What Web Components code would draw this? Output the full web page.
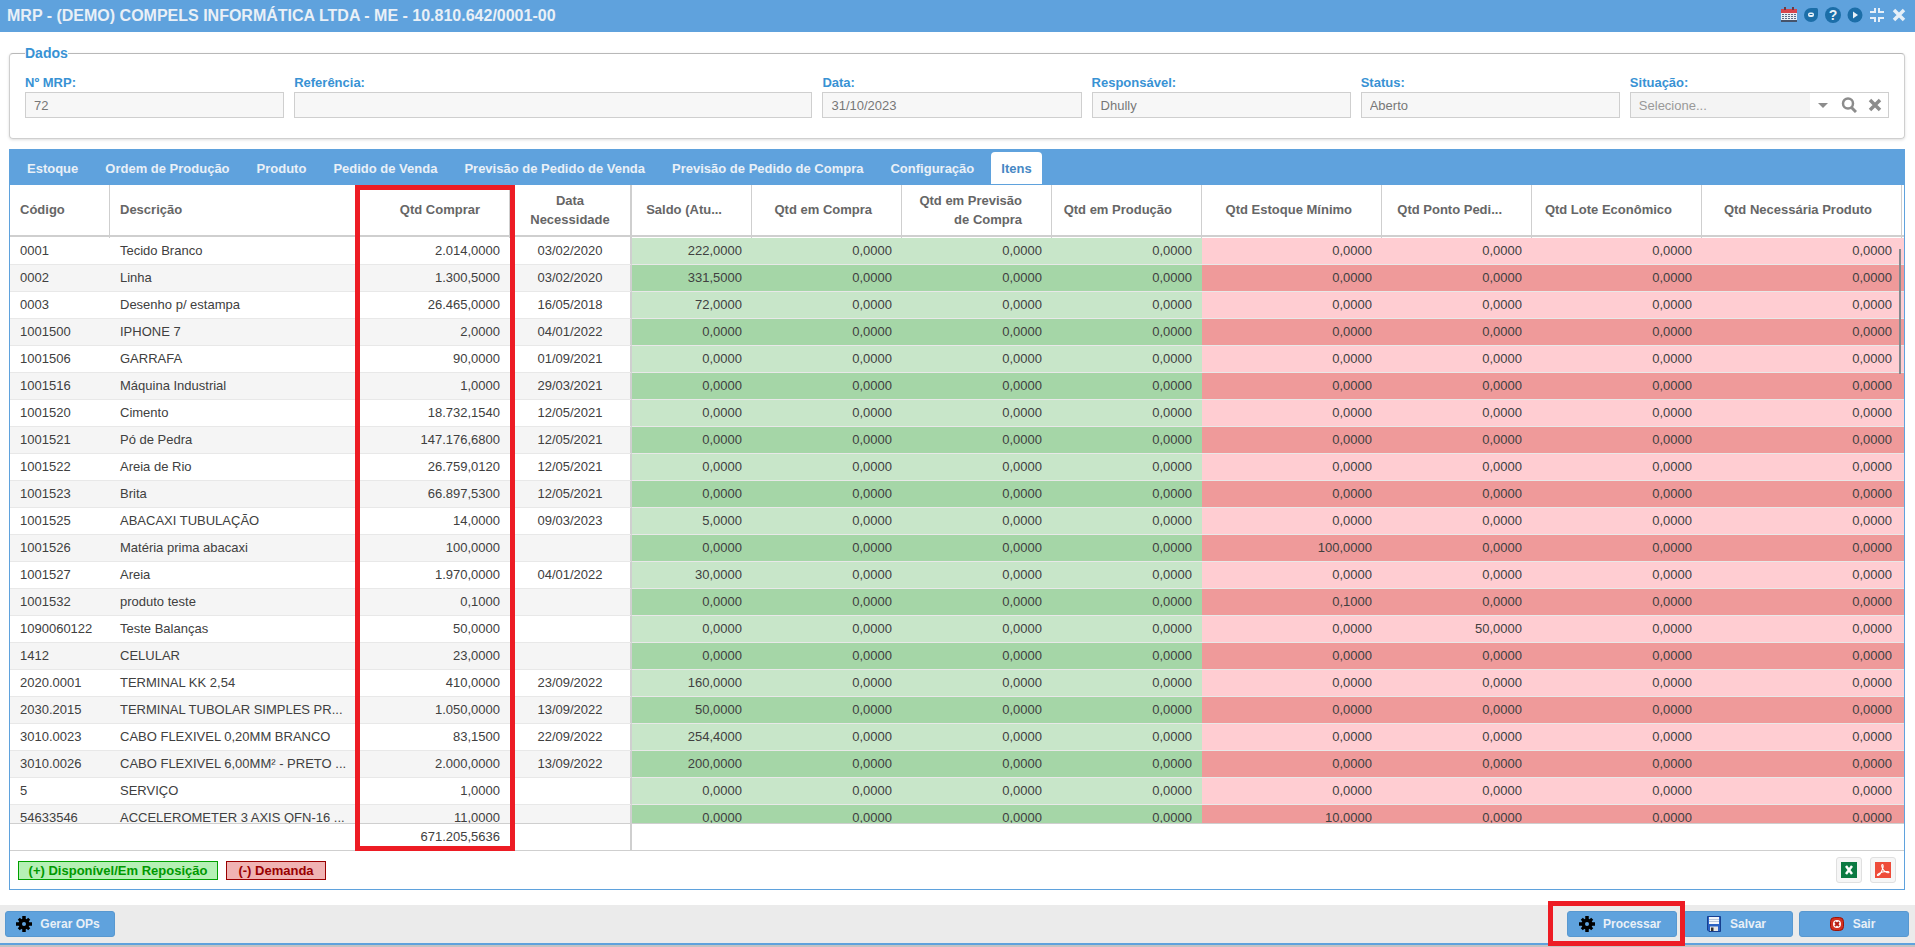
<!DOCTYPE html>
<html lang="pt-BR">
<head>
<meta charset="utf-8">
<title>MRP</title>
<style>
html, body {
  height: 100%;
  margin: 0;
}
body {
  font-family: "Liberation Sans", Arial, sans-serif;
  font-size: 13px;
  color: #404040;
  background: #fff;
  overflow: hidden;
  --blue: #5fa2dd;
  --line: #cfcfcf;
}
</style>
</head>
<body>
<mrp-window heading="MRP - (DEMO) COMPELS INFORMÁTICA LTDA - ME - 10.810.642/0001-00">
  <mrp-fieldset legend="Dados">
    <mrp-field label="Nº MRP:" value="72"></mrp-field>
    <mrp-field label="Referência:" value=""></mrp-field>
    <mrp-field label="Data:" value="31/10/2023"></mrp-field>
    <mrp-field label="Responsável:" value="Dhully"></mrp-field>
    <mrp-field label="Status:" value="Aberto"></mrp-field>
    <mrp-lookup label="Situação:" placeholder="Selecione..."></mrp-lookup>
  </mrp-fieldset>
  <mrp-tabs tabs="Estoque|Ordem de Produção|Produto|Pedido de Venda|Previsão de Pedido de Venda|Previsão de Pedido de Compra|Configuração|Itens" active="Itens">
    <mrp-grid></mrp-grid>
    <mrp-legend></mrp-legend>
  </mrp-tabs>
  <mrp-button slot="left" icon="gear">Gerar OPs</mrp-button>
  <mrp-button slot="right" icon="gear" marked>Processar</mrp-button>
  <mrp-button slot="right" icon="disk">Salvar</mrp-button>
  <mrp-button slot="right" icon="exit">Sair</mrp-button>
</mrp-window>

<script>
// Icons, all drawn on a 16x16 box
const icons = {
  calendar: `<path fill="#e9edf3" d="M0 4h16v11H0z"/><path fill="#d8434b" d="M0 2h16v4H0z"/><path fill="#6d3a44" d="M3 0h2v3H3zM11 0h2v3h-2z"/><path stroke="#5b6b86" stroke-dasharray="2 1" fill="none" d="M1 7.500h14M1 9.500h14M1 11.500h14"/><path fill="#46536a" d="M0 13h16v2H0z"/>`,
  chat: `<path fill="#1c6ea8" d="M8 1h5.500q1.500 0 1.500 1.500V8a7 7 0 1 1-7-7z"/><rect x="5" y="5.500" width="6" height="4.500" rx="2" fill="#e8f1f8"/><path stroke="#1c6ea8" d="M6.500 7.500h3"/>`,
  help: `<circle cx="8" cy="8" r="8" fill="#1c6ea8"/><text x="8" y="13" text-anchor="middle" font-size="14" font-weight="bold" fill="#e8f1f8">?</text>`,
  play: `<circle cx="8" cy="8" r="7.500" fill="#1c6ea8"/><path fill="#e8f1f8" d="M6 4.500l5 3.500-5 3.500z"/>`,
  compress: `<path fill="none" stroke="#e6eff8" stroke-width="2" d="M6 1v4H1M10 1v4h5M6 15v-4H1M10 15v-4h5"/>`,
  close: `<path fill="none" stroke="currentColor" stroke-width="3.500" d="M3 3l10 10M13 3L3 13"/>`,
  arrow: `<path fill="#8c8c8c" d="M3 6h10l-5 5z"/>`,
  search: `<circle cx="7" cy="6.500" r="5" fill="none" stroke="#8c8c8c" stroke-width="2.500"/><path stroke="#8c8c8c" stroke-width="3" d="M10.500 10.500l4.500 4.500"/>`,
  gear: `<path stroke="#000" stroke-width="3.500" d="M8 0v16M0 8h16"/><path stroke="#000" stroke-width="3" d="M2.800 2.800l10.400 10.400M13.200 2.800L2.800 13.200"/><circle cx="8" cy="8" r="5.500"/><circle cx="8" cy="8" r="2" fill="#5fa2dd"/>`,
  disk: `<path fill="#2a62c4" stroke="#173f8f" d="M1.500.5h13v15H3l-1.500-1.500z"/><path fill="#f4f7fb" d="M3 1h10v7H3z"/><path stroke="#b9c6da" d="M3 3.500h10M3 5.500h10"/><path fill="#e6e6e6" d="M4 10.500h8V15H4z"/><path fill="#333" d="M5 11.500h2.500V15H5z"/>`,
  exit: `<rect x="1.500" y="1.500" width="13" height="13" rx="4" fill="#d3311f" stroke="#9c1408"/><circle cx="8" cy="8" r="4" fill="#fff"/><path stroke="#b51c10" stroke-width="2" d="M6 6l4 4M10 6l-4 4"/>`,
  excel: `<path fill="#0b7a42" d="M0 0h16v16H0z"/><path stroke="#fff" stroke-width="2.500" d="M5 4l6 8M11 4l-6 8"/>`,
  pdf: `<path fill="#ee4c3a" d="M0 0h16v16H0z"/><path fill="none" stroke="#fff" stroke-width="1.100" d="M7.500 2.500c-1.500 0-.5 4 1 5.500 2 2.500 5.500 3.500 5.500 2.200s-6-.7-9 .8-3 2.500-2 2.500c2 0 5.500-7.500 5.200-9.500-.1-1-.3-1.500-.7-1.500z"/>`
};

function icon(name) {
  return `<svg width="16" height="16" viewBox="0 0 16 16" aria-hidden="true">${icons[name]}</svg>`;
}

// Base class - opens the shadow root and fills it with what render() returns
class MrpElement extends HTMLElement {
  constructor() {
    super();
    this.attachShadow({mode: "open"});
  }
  connectedCallback() {
    const template = document.createElement("template");
    template.innerHTML = this.render();
    this.shadowRoot.replaceChildren(template.content.cloneNode(true));
  }
}

// Whole screen: title bar, content, bar with the actions
class MrpWindow extends MrpElement {
  render() {
    return `
<style>
:host {
  display: flex;
  flex-direction: column;
  height: 100vh;
}
header {
  display: flex;
  align-items: center;
  justify-content: space-between;
  flex: none;
  height: 32px;
  padding: 0 8px 0 7px;
  box-sizing: border-box;
  background: var(--blue);
  color: #e9f0f7;
}
h1 {
  margin: 0;
  font-size: 16px;
}
nav {
  display: flex;
  gap: 6px;
  padding-bottom: 2px;
}
nav button {
  display: flex;
  padding: 0;
  border: 0;
  background: none;
  color: #e6eff8;
}
main {
  display: flex;
  flex-direction: column;
  flex: 1;
  min-height: 0;
  padding: 13px 10px 15px 9px;
  gap: 10px;
}
footer {
  display: flex;
  justify-content: space-between;
  flex: none;
  padding: 6px 6px 6px 5px;
  background: #ebebeb;
  border-bottom: 2px solid var(--blue);
  box-shadow: 0 2px #c4c4c4;
  margin-bottom: 2px;
}
footer div {
  display: flex;
  gap: 6px;
}
</style>
<header>
  <h1>${this.getAttribute("heading")}</h1>
  <nav>
    <button type="button" aria-label="Agenda">${icon("calendar")}</button>
    <button type="button" aria-label="Chat">${icon("chat")}</button>
    <button type="button" aria-label="Ajuda">${icon("help")}</button>
    <button type="button" aria-label="Vídeo">${icon("play")}</button>
    <button type="button" aria-label="Restaurar">${icon("compress")}</button>
    <button type="button" aria-label="Fechar">${icon("close")}</button>
  </nav>
</header>
<main><slot></slot></main>
<footer>
  <div><slot name="left"></slot></div>
  <div><slot name="right"></slot></div>
</footer>`;
  }
}

class MrpFieldset extends MrpElement {
  render() {
    return `
<style>
:host {
  display: block;
}
fieldset {
  margin: 0;
  padding: 13px 15px 20px;
  border: 1px solid var(--line);
  border-top-color: #b8b8b8;
  border-radius: 4px;
  box-shadow: 0 1px 3px #ddd;
}
legend {
  padding: 0;
  font-size: 14px;
  line-height: 16px;
  font-weight: bold;
  color: #3892d4;
}
div {
  display: grid;
  grid-template-columns: 1fr 2fr 1fr 1fr 1fr 1fr;
  gap: 10px;
}
</style>
<fieldset>
  <legend>${this.getAttribute("legend")}</legend>
  <div><slot></slot></div>
</fieldset>`;
  }
}

const field_style = `
:host {
  display: block;
  min-width: 0;
}
label {
  display: block;
  line-height: 18px;
  font-weight: bold;
  color: #3892d4;
}
input, select {
  display: block;
  box-sizing: border-box;
  width: 100%;
  height: 26px;
  margin: 0;
  padding: 0 8px;
  border: 1px solid var(--line);
  border-radius: 0;
  background: #f7f7f7;
  font: inherit;
  color: #777;
}`;

class MrpField extends MrpElement {
  render() {
    return `
<style>${field_style}</style>
<label for="box">${this.getAttribute("label")}</label>
<input id="box" type="text" readonly value="${this.getAttribute("value")}">`;
  }
}

// Drop-down followed by its open, search and clear triggers
class MrpLookup extends MrpElement {
  render() {
    return `
<style>${field_style}
div {
  display: flex;
  box-sizing: border-box;
  height: 26px;
  border: 1px solid var(--line);
}
select {
  flex: 1;
  min-width: 0;
  height: 24px;
  border: 0;
  appearance: none;
  background: #f4f4f4;
  color: #999;
}
button {
  display: flex;
  align-items: center;
  justify-content: center;
  flex: none;
  width: 26px;
  padding: 0;
  border: 0;
  background: #fff;
  color: #8c8c8c;
}
</style>
<label for="box">${this.getAttribute("label")}</label>
<div>
  <select id="box"><option>${this.getAttribute("placeholder")}</option></select>
  <button type="button" aria-label="Abrir">${icon("arrow")}</button>
  <button type="button" aria-label="Pesquisar">${icon("search")}</button>
  <button type="button" aria-label="Limpar">${icon("close")}</button>
</div>`;
  }
}

class MrpTabs extends MrpElement {
  render() {
    const active = this.getAttribute("active");
    const tabs = this.getAttribute("tabs").split("|").map(tab =>
      `<button type="button" role="tab" aria-selected="${tab == active}">${tab}</button>`).join("");
    return `
<style>
:host {
  display: flex;
  flex-direction: column;
  flex: 1;
  min-height: 0;
}
nav {
  display: flex;
  flex: none;
  gap: 7px;
  padding: 3px 8px 1px;
  background: var(--blue);
}
button {
  height: 32px;
  padding: 0 10px;
  border: 0;
  border-radius: 4px 4px 0 0;
  background: none;
  font: bold 13px "Liberation Sans", Arial, sans-serif;
  color: #e9f0f7;
}
button[aria-selected=true] {
  background: #fff;
  color: #4688c4;
}
section {
  display: flex;
  flex-direction: column;
  flex: 1;
  min-height: 0;
  border: 1px solid var(--blue);
  border-top: 0;
}
</style>
<nav role="tablist">${tabs}</nav>
<section role="tabpanel"><slot></slot></section>`;
  }
}

// Fields: code, description, qty to buy, needed on, balance, minimum stock, order point
// The other quantities are zero in every line
const items = [
  ["0001", "Tecido Branco", "2.014,0000", "03/02/2020", "222,0000"],
  ["0002", "Linha", "1.300,5000", "03/02/2020", "331,5000"],
  ["0003", "Desenho p/ estampa", "26.465,0000", "16/05/2018", "72,0000"],
  ["1001500", "IPHONE 7", "2,0000", "04/01/2022"],
  ["1001506", "GARRAFA", "90,0000", "01/09/2021"],
  ["1001516", "Máquina Industrial", "1,0000", "29/03/2021"],
  ["1001520", "Cimento", "18.732,1540", "12/05/2021"],
  ["1001521", "Pó de Pedra", "147.176,6800", "12/05/2021"],
  ["1001522", "Areia de Rio", "26.759,0120", "12/05/2021"],
  ["1001523", "Brita", "66.897,5300", "12/05/2021"],
  ["1001525", "ABACAXI TUBULAÇÃO", "14,0000", "09/03/2023", "5,0000"],
  ["1001526", "Matéria prima abacaxi", "100,0000", "", "0,0000", "100,0000"],
  ["1001527", "Areia", "1.970,0000", "04/01/2022", "30,0000"],
  ["1001532", "produto teste", "0,1000", "", "0,0000", "0,1000"],
  ["1090060122", "Teste Balanças", "50,0000", "", "0,0000", "0,0000", "50,0000"],
  ["1412", "CELULAR", "23,0000", ""],
  ["2020.0001", "TERMINAL KK 2,54", "410,0000", "23/09/2022", "160,0000"],
  ["2030.2015", "TERMINAL TUBOLAR SIMPLES PR...", "1.050,0000", "13/09/2022", "50,0000"],
  ["3010.0023", "CABO FLEXIVEL 0,20MM BRANCO", "83,1500", "22/09/2022", "254,4000"],
  ["3010.0026", "CABO FLEXIVEL 6,00MM² - PRETO ...", "2.000,0000", "13/09/2022", "200,0000"],
  ["5", "SERVIÇO", "1,0000", ""],
  ["54633546", "ACCELEROMETER 3 AXIS QFN-16 ...", "11,0000", "", "0,0000", "10,0000"]
];

// Column title, width and class; the last data column takes what is left
const columns = [
  ["Código", 100, "text"],
  ["Descrição", 250, "text"],
  ["Qtd Comprar", 150, ""],
  ["Data Necessidade", 122, "date"],
  ["Saldo (Atu...", 120, "plus"],
  ["Qtd em Compra", 150, "plus"],
  ["Qtd em Previsão de Compra", 150, "plus"],
  ["Qtd em Produção", 150, "plus"],
  ["Qtd Estoque Mínimo", 180, "minus"],
  ["Qtd Ponto Pedi...", 150, "minus"],
  ["Qtd Lote Econômico", 170, "minus"],
  ["Qtd Necessária Produto", 0, "minus"],
  ["", 2, "minus edge"]
];

class MrpGrid extends MrpElement {
  cells(item) {
    const [code, name, buy, date, balance = "0,0000", minimum = "0,0000", point = "0,0000"] = item;
    const zero = "0,0000";
    return [code, name, buy, date, balance, zero, zero, zero, minimum, point, zero, zero, ""];
  }
  render() {
    const cols = columns.map(c => `<col${c[1] ? ` style="width:${c[1]}px"` : ""}>`).join("");
    const heads = columns.map(c => `<th class="${c[2]}">${c[0]}</th>`).join("");
    const rows = items.map(item => "<tr>" + this.cells(item).map((value, i) =>
      `<td class="${columns[i][2]}">${value}</td>`).join("") + "</tr>").join("");
    return `
<style>
:host {
  display: block;
  position: relative;
  flex: 1;
  min-height: 0;
}
#scroller {
  height: 100%;
  overflow: hidden;
}
table {
  width: 100%;
  table-layout: fixed;
  border-spacing: 0;
}
th, td {
  box-sizing: border-box;
  padding: 0 10px 2px;
  text-align: right;
  white-space: nowrap;
  overflow: hidden;
}
th {
  height: 53px;
  padding: 0 29px 4px 10px;
  line-height: 19px;
  white-space: normal;
  color: #666;
  border-right: 1px solid var(--line);
  background: linear-gradient(var(--line), var(--line)) 0 50px / 100% 2px no-repeat #fff;
}
td {
  height: 27px;
  border-bottom: 1px solid #e8e8e8;
}
thead, tfoot {
  position: sticky;
  z-index: 1;
}
thead {
  top: 0;
}
tfoot {
  bottom: 0;
}
tfoot td {
  height: 28px;
  background: #fff;
  border-top: 1px solid var(--line);
  border-bottom: 1px solid var(--line);
}
th.text, td.text {
  padding-right: 4px;
  text-align: left;
}
th.date, td.date {
  padding-left: 10px;
  padding-right: 10px;
  text-align: center;
  border-right: 2px solid var(--line);
}
tbody tr:nth-child(even) {
  background: #f5f5f5;
}
tbody .plus {
  background: #c8e6c9;
}
tbody tr:nth-child(even) .plus {
  background: #a5d6a7;
}
tbody .minus {
  background: #ffcdd2;
}
tbody tr:nth-child(even) .minus {
  background: #ef9a9a;
}
th.edge, td.edge {
  padding: 0;
  border-right: 0;
}
/* overlay scrollbar */
#thumb {
  position: absolute;
  top: 64px;
  right: 3px;
  width: 2px;
  height: 125px;
  background: #848a8e;
}
/* frame over the "Qtd Comprar" column */
#mark {
  position: absolute;
  z-index: 2;
  top: 0;
  bottom: 0;
  left: 345px;
  width: 160px;
  box-sizing: border-box;
  border: 5px solid #ed1c24;
}
</style>
<div id="scroller">
  <table>
    <colgroup>${cols}</colgroup>
    <thead><tr>${heads}</tr></thead>
    <tbody>${rows}</tbody>
    <tfoot><tr><td></td><td></td><td>671.205,5636</td><td class="date"></td><td colspan="9"></td></tr></tfoot>
  </table>
</div>
<div id="thumb"></div>
<div id="mark"></div>`;
  }
}

// Colour key of the grid and the export buttons
class MrpLegend extends MrpElement {
  render() {
    return `
<style>
:host {
  display: flex;
  align-items: center;
  gap: 8px;
  flex: none;
  height: 38px;
  padding: 0 8px;
}
span {
  box-sizing: border-box;
  width: 100px;
  line-height: 17px;
  border: 1px solid #990000;
  background: #f0b3b3;
  color: #990000;
  font-weight: bold;
  text-align: center;
}
.plus {
  width: 200px;
  border-color: #00a000;
  background: #b5f0b5;
  color: #009900;
}
button {
  display: flex;
  align-items: center;
  justify-content: center;
  width: 26px;
  height: 26px;
  padding: 0;
  border: 1px solid #e0e0e0;
  border-radius: 3px;
  background: #f6f6f6;
}
.first {
  margin-left: auto;
}
</style>
<span class="plus">(+) Disponível/Em Reposição</span>
<span>(-) Demanda</span>
<button class="first" type="button" aria-label="Exportar Excel">${icon("excel")}</button>
<button type="button" aria-label="Exportar PDF">${icon("pdf")}</button>`;
  }
}

class MrpButton extends MrpElement {
  render() {
    return `
<style>
:host {
  display: block;
  position: relative;
}
button {
  display: flex;
  align-items: center;
  justify-content: center;
  gap: 8px;
  box-sizing: border-box;
  width: 110px;
  height: 26px;
  padding: 0 12px 0 8px;
  border: 1px solid #5898d0;
  border-radius: 3px;
  background: var(--blue);
  font: bold 12px "Liberation Sans", Arial, sans-serif;
  color: #e9f0f7;
}
svg {
  flex: none;
}
:host([marked]) {
  z-index: 1;
}
:host([marked])::after {
  content: "";
  position: absolute;
  inset: -10px -8px -9px -19px;
  border: 5px solid #ed1c24;
}
</style>
<button type="button">${icon(this.getAttribute("icon"))}<span><slot></slot></span></button>`;
  }
}

customElements.define("mrp-window", MrpWindow);
customElements.define("mrp-fieldset", MrpFieldset);
customElements.define("mrp-field", MrpField);
customElements.define("mrp-lookup", MrpLookup);
customElements.define("mrp-tabs", MrpTabs);
customElements.define("mrp-grid", MrpGrid);
customElements.define("mrp-legend", MrpLegend);
customElements.define("mrp-button", MrpButton);
</script>
</body>
</html>
